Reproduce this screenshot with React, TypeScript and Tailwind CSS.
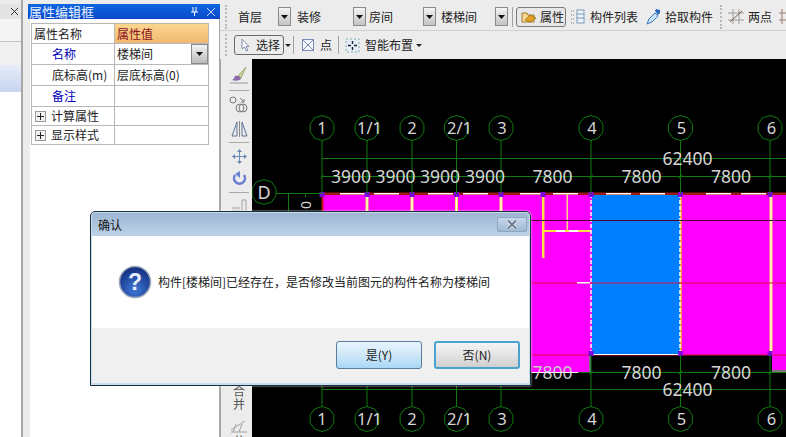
import React from "react";

const cjk = { fontFamily: '"Noto Sans CJK SC", "Liberation Sans", sans-serif' } as const;

function Arrow({ className = "" }: { className?: string }) {
  return (
    <span className={`flex h-[19px] w-[13px] shrink-0 items-center justify-center border border-[#8a8a8a] bg-gradient-to-b from-[#f4f4f4] to-[#c4c4c4] ${className}`}>
      <svg width="7" height="4" viewBox="0 0 7 4"><path d="M0 0h7L3.5 4z" fill="#111" /></svg>
    </span>
  );
}

function Caret() {
  return <svg width="6" height="3" viewBox="0 0 6 3"><path d="M0 0h6L3 3z" fill="#222" /></svg>;
}

function Combo({ label, w, ml }: { label: string; w: string; ml: string }) {
  return (
    <div className={`flex shrink-0 items-center ${ml}`}>
      <span className={`${w} text-[12px] leading-none text-[#222]`}>{label}</span>
      <Arrow />
    </div>
  );
}

function Row({ name, value, blue, plus, arrow, h }: { name: string; value?: string; blue?: boolean; plus?: boolean; arrow?: boolean; h: string }) {
  return (
    <div className={`flex ${h} border-b border-[#b8b8b8]`}>
      <div className="flex w-[83px] items-center border-r border-[#b8b8b8]">
        {plus ? (
          <span className="ml-[3px] mr-[5px] flex h-[11px] w-[11px] items-center justify-center border border-[#999] bg-[#f2f2f2]">
            <svg width="7" height="7" viewBox="0 0 7 7"><path d="M0 3.5h7M3.5 0v7" stroke="#222" /></svg>
          </span>
        ) : (
          <span className="w-[20px]" />
        )}
        <span className={`whitespace-nowrap text-[12px] leading-none ${blue ? "text-[#0000b8]" : "text-[#222]"}`}>{name}</span>
      </div>
      <div className="relative flex flex-1 items-center pl-[2px] text-[12px] leading-none text-[#222]">
        {value}
        {arrow && (
          <span className="absolute right-0 top-0 flex h-[20px] w-[17px] items-center justify-center border border-[#8a8a8a] bg-gradient-to-b from-[#f2f2f2] to-[#bcbcbc]">
            <svg width="7" height="4" viewBox="0 0 7 4"><path d="M0 0h7L3.5 4z" fill="#111" /></svg>
          </span>
        )}
      </div>
    </div>
  );
}

function Handle({ className = "" }: { className?: string }) {
  return <span className={`w-0 shrink-0 border-l-2 border-dotted border-[#b8b8b8] ${className}`} />;
}

function SideIcon({ children, mt }: { children: React.ReactNode; mt: string }) {
  return <div className={`flex justify-center ${mt}`}>{children}</div>;
}

function Divider({ mt }: { mt: string }) {
  return <div className={`mx-auto h-px w-[20px] bg-[#a8a8a8] ${mt}`} />;
}

const axes: [string, number, number][] = [
  ["1", 322, 322],
  ["1/1", 367, 369.5],
  ["2", 412, 412],
  ["2/1", 456.5, 459.5],
  ["3", 501, 502],
  ["4", 591, 592],
  ["5", 680.5, 681.5],
  ["6", 770, 771.5],
];

const G = "#0f7a0f";
const T = "#d6d6d6";

function Oct({ cx, cy, r = 12.5 }: { cx: number; cy: number; r?: number }) {
  const pts = Array.from({ length: 10 }, (_, i) => {
    const a = (Math.PI * 2 * i) / 10 + Math.PI / 10;
    return `${cx + r * Math.cos(a)},${cy + r * Math.sin(a)}`;
  }).join(" ");
  return <polygon points={pts} fill="none" stroke={G} strokeWidth="1" />;
}

function Canvas() {
  const num = { fontFamily: '"Noto Sans", sans-serif', fontSize: 17.5, fill: T, textAnchor: "middle" as const };
  return (
    <svg width="534" height="378" viewBox="252 59 534 378" className="block bg-black">
      <rect x="322" y="194" width="464" height="161" fill="#ff00ff" />
      <rect x="322" y="355" width="268" height="17" fill="#ff00ff" />
      <rect x="772" y="355" width="14" height="15" fill="#ff00ff" />
      <rect x="772" y="370" width="14" height="2" fill="#777" />
      <rect x="589" y="355" width="2" height="17" fill="#777" />
      <rect x="592" y="194" width="88" height="161" fill="#0080ff" />

      <rect x="322" y="192.5" width="464" height="2.5" fill="#9c1c10" />
      {[340, 374, 428, 463, 520, 553, 606, 640, 706, 741].map((x) => (
        <rect key={x} x={x} y="193" width="25" height="1.5" fill="#fff" />
      ))}
      <line x1="322.5" y1="193" x2="322.5" y2="215" stroke="#c01010" strokeWidth="2" />
      {[367, 412, 456.5, 501].map((x) => (
        <g key={x}>
          <rect x={x - 1.5} y="194" width="3" height="30" fill="#ffe060" />
          <rect x={x - 0.5} y="194" width="1" height="30" fill="#fff" />
        </g>
      ))}
      <rect x="542" y="194" width="2.5" height="64" fill="#ffe040" />
      <rect x="566.5" y="194" width="1.5" height="37" fill="#ffd080" />
      <rect x="543" y="230" width="48" height="2" fill="#ffe040" />
      <rect x="556" y="230" width="9" height="2" fill="#fff" />
      <rect x="569" y="230" width="9" height="2" fill="#fff" />
      <line x1="591" y1="194" x2="591" y2="355" stroke="#fff" strokeWidth="1.5" strokeDasharray="4 2" />
      <rect x="680" y="194" width="2" height="161" fill="#ff9040" />
      <line x1="680" y1="194" x2="680" y2="355" stroke="#fff" strokeWidth="1.5" strokeDasharray="4 2" />
      <rect x="769.5" y="194" width="3" height="161" fill="#ffe060" />
      <rect x="770.5" y="194" width="1" height="161" fill="#fff" />
      <line x1="322" y1="220.5" x2="786" y2="220.5" stroke="#500030" strokeWidth="1" />
      <line x1="322" y1="283" x2="786" y2="283" stroke="#e01040" strokeWidth="1" />
      <line x1="322" y1="355" x2="786" y2="355" stroke="#e01040" strokeWidth="1" />
      <rect x="577" y="282" width="13" height="1.5" fill="#fff" />
      <line x1="592" y1="354.5" x2="680" y2="354.5" stroke="#fff" strokeWidth="1" />
      {[322, 367, 412, 456.5, 501, 543, 591, 680.5, 770].map((x) => (
        <rect key={x} x={x - 2.5} y="192" width="5" height="5" fill="#8000e0" />
      ))}
      {[591, 680.5, 770].map((x) => (
        <rect key={x} x={x - 2.5} y="351" width="5" height="5" fill="#8000e0" />
      ))}

      <line x1="322" y1="158.5" x2="786" y2="158.5" stroke={G} />
      <line x1="322" y1="176.5" x2="786" y2="176.5" stroke={G} />
      <line x1="322" y1="372.5" x2="786" y2="372.5" stroke={G} />
      <line x1="322" y1="389.5" x2="786" y2="389.5" stroke={G} />
      <line x1="276" y1="193.5" x2="322" y2="193.5" stroke={G} />
      <line x1="288.5" y1="193" x2="288.5" y2="215" stroke={G} />
      <line x1="305.5" y1="193" x2="305.5" y2="197" stroke={G} />
      {axes.map(([label, x, tx]) => (
        <g key={label}>
          <line x1={x} y1="140.5" x2={x} y2="194" stroke={G} />
          <line x1={x} y1="355" x2={x} y2="406.5" stroke={G} />
          <Oct cx={x} cy={128} />
          <Oct cx={x} cy={419} />
          <text x={tx} y="134" {...num} fontSize="16.5">{label}</text>
          <text x={tx} y="425" {...num} fontSize="16.5">{label}</text>
        </g>
      ))}
      {[322, 367, 412, 456.5, 501, 591, 680.5, 770].map((x) => (
        <path key={x} d={`M${x - 2} 178.5l4 -4M${x - 2} 374.5l4 -4`} stroke={G} />
      ))}

      <Oct cx={264} cy={192} />
      <text x="264" y="198.5" {...num} fontSize="18">D</text>
      <text x="0" y="0" {...num} fontSize="14" transform="translate(300.5 205) rotate(90)">0</text>

      {[351, 395.5, 440, 485].map((x) => (
        <text key={x} x={x} y="182.5" {...num}>3900</text>
      ))}
      {[552.5, 641.5, 731].map((x) => (
        <text key={x} x={x} y="182.5" {...num}>7800</text>
      ))}
      <text x="687.5" y="165" {...num}>62400</text>
      <text x="552.5" y="378.5" {...num} fill="#c8c8c8">7800</text>
      <line x1="532" y1="372.5" x2="578" y2="372.5" stroke="#fff" />
      <text x="641.5" y="378.5" {...num}>7800</text>
      <text x="731" y="378.5" {...num}>7800</text>
      <text x="687.5" y="395.5" {...num}>62400</text>
    </svg>
  );
}

function HelpIcon() {
  return (
    <svg width="34" height="34" viewBox="0 0 34 34" className="shrink-0">
      <defs>
        <radialGradient id="q" cx="50%" cy="75%" r="70%">
          <stop offset="0" stopColor="#3f78d8" />
          <stop offset="1" stopColor="#132f80" />
        </radialGradient>
      </defs>
      <circle cx="17" cy="17" r="15.5" fill="url(#q)" stroke="#9aa4b8" strokeWidth="1.5" />
      <text x="17" y="25" textAnchor="middle" fontSize="23" fontWeight="700" fill="#e8eef8" fontFamily='"Liberation Sans", sans-serif'>?</text>
    </svg>
  );
}

function Dialog() {
  return (
    <div className="absolute left-[90px] top-[211px] flex h-[175px] w-[441px] flex-col rounded-t-[5px] border border-[#18303c] bg-[#c8dcee] px-px pb-[2px] pt-px shadow-[0_0_2px_#fff]">
      <div className="flex h-[23px] items-center justify-between rounded-t-[4px] bg-gradient-to-b from-[#9db6d2] to-[#bdd3ea] pl-[6px] pr-[2px]">
        <span className="text-[12px] leading-none text-[#111]">确认</span>
        <span className="flex h-[15px] w-[30px] items-center justify-center rounded-[2px] border border-[#8ea6c0] bg-gradient-to-b from-[#c8d8ea] to-[#9fb8d4]">
          <svg width="14" height="11" viewBox="0 0 14 11">
            <path d="M3 1.5l8 8M11 1.5l-8 8" stroke="#e8eef6" strokeWidth="3.4" />
            <path d="M3 1.5l8 8M11 1.5l-8 8" stroke="#68788a" strokeWidth="1.8" />
          </svg>
        </span>
      </div>
      <div className="flex h-[92px] items-center gap-[6px] bg-white pl-[26px]">
        <HelpIcon />
        <span className="text-[12px] leading-none text-[#222]">构件[楼梯间]已经存在，是否修改当前图元的构件名称为楼梯间</span>
      </div>
      <div className="flex flex-1 items-start justify-end gap-[12px] bg-[#f0f0f0] pr-[9px] pt-[13px]">
        <button className="flex h-[28px] w-[86px] items-center justify-center rounded-[3px] border border-[#5c7c9c] bg-gradient-to-b from-[#e6f4fc] via-[#cfe8f8] to-[#a8d8f6] text-[12px] leading-none text-[#222]">是(Y)</button>
        <button className="flex h-[28px] w-[86px] items-center justify-center rounded-[3px] border-2 border-[#48a4cc] bg-gradient-to-b from-[#f4f4f4] via-[#e4e4e4] to-[#cfcfcf] text-[12px] leading-none text-[#222]">否(N)</button>
      </div>
    </div>
  );
}

export default function App() {
  return (
    <div className="relative flex h-[437px] w-[786px] overflow-hidden bg-[#ececec]" style={cjk}>
      {/* left strip */}
      <div className="flex w-[23px] flex-col border-r-2 border-[#a8a8a8]">
        <div className="mt-[4px] flex h-[15px] items-center justify-end bg-[#e4e4e4] pr-[2px]">
          <svg width="9" height="9" viewBox="0 0 9 9"><path d="M1 1l7 7M8 1L1 8" stroke="#333" /></svg>
        </div>
        <div className="h-[23px] border-b border-[#c4c4c4] bg-[#f4f4f4]" />
        <div className="h-[23px] bg-[#f0f0f0]" />
        <div className="h-[27px] bg-gradient-to-b from-[#e6ecf8] to-[#c8d4f0]" />
        <div className="flex-1 bg-white" />
      </div>

      {/* property panel */}
      <div className="flex w-[197px] flex-col pl-[5px] pt-[4px]">
        <div className="flex h-[15px] items-center justify-between bg-gradient-to-b from-[#0f66e0] to-[#0a48c8] pl-[1px] pr-[5px] text-[13px] leading-none text-[#e8f0ff]">
          <span>属性编辑框</span>
          <span className="flex items-center gap-[9px]">
            <svg width="7" height="9" viewBox="0 0 7 9"><path d="M2 0v5M5 0v5M0 5h7M3.5 5v4" stroke="#fff" /></svg>
            <svg width="8" height="8" viewBox="0 0 8 8"><path d="M0 0l8 8M8 0L0 8" stroke="#c8d8f8" /></svg>
          </span>
        </div>
        <div className="ml-[2px] flex-1 border-r border-[#a8a8a8] bg-white pl-[1px] pt-[4px]">
          <div className="w-[178px] border border-b-0 border-[#b8b8b8] bg-white">
            <div className="flex h-[20px] border-b border-[#b8b8b8]">
              <div className="flex w-[83px] items-center border-r border-[#b8b8b8] pl-[2px] text-[12px] leading-none text-[#222]">属性名称</div>
              <div className="flex flex-1 items-center bg-gradient-to-b from-[#fbd690] to-[#f0b870] pl-[2px] text-[12px] leading-none text-[#8a1020]">属性值</div>
            </div>
            <Row h="h-[21px]" name="名称" value="楼梯间" blue arrow />
            <Row h="h-[21px]" name="底标高(m)" value="层底标高(0)" />
            <Row h="h-[21px]" name="备注" blue />
            <Row h="h-[19px]" name="计算属性" plus />
            <Row h="h-[19px]" name="显示样式" plus />
          </div>
        </div>
      </div>

      {/* main */}
      <div className="flex w-[566px] flex-col">
        <div className="mt-[4px] flex h-[27px] items-center overflow-hidden whitespace-nowrap border-b border-[#d0d0d0] pl-[5px] text-[12px] leading-none text-[#222]">
          <Handle className="h-[24px]" />
          <div className="flex shrink-0 items-center pb-[1px]">
            <Combo label="首层" w="w-[40px]" ml="ml-[11px]" />
            <Combo label="装修" w="w-[56px]" ml="ml-[6px]" />
            <Combo label="房间" w="w-[54px]" ml="ml-[3px]" />
            <Combo label="楼梯间" w="w-[54px]" ml="ml-[5px]" />
            <span className="ml-[4px] h-[20px] w-px bg-[#a0a0a0]" />
            <div className="ml-[3px] flex h-[20px] w-[50px] items-center gap-[3px] rounded-[3px] border border-[#7a7a7a] bg-[#e8e8e8] pl-[4px]">
              <svg width="16" height="14" viewBox="0 0 16 14">
                <path d="M1 3h5l1 2h6v7H1z" fill="#f8d890" stroke="#a07830" />
                <path d="M4 10l5-5 6 3-6 4z" fill="#e8a020" stroke="#806010" strokeWidth=".6" />
              </svg>
              <span>属性</span>
            </div>
            <svg width="15" height="15" viewBox="0 0 15 15" className="ml-[4px]">
              <path d="M1 2h3M1 6h3M1 10h3M1 14h3" stroke="#6a7a8a" strokeDasharray="1 1" />
              <rect x="7" y="1" width="7" height="13" fill="#eef4fa" stroke="#7a9ab8" />
              <path d="M7 5h7M7 9h7" stroke="#7a9ab8" />
            </svg>
            <span className="ml-[5px]">构件列表</span>
            <svg width="15" height="17" viewBox="0 0 15 17" className="ml-[8px]">
              <path d="M1 16l2-5 6-6 3 3-6 6z" fill="#c8e4f8" stroke="#3a78c0" />
              <path d="M9 3l1-2 4 1 0 3-2 2z" fill="#2a68b8" />
            </svg>
            <span className="ml-[4px]">拾取构件</span>
            <Handle className="ml-[7px] h-[24px]" />
            <svg width="16" height="15" viewBox="0 0 16 15" className="ml-[6px]">
              <path d="M5 0v15M11 0v15M0 4h16M0 11h16" stroke="#9a9a9a" />
              <path d="M2 13L14 2" stroke="#7a5a4a" />
            </svg>
            <span className="ml-[4px]">两点</span>
            <svg width="8" height="15" viewBox="0 0 8 15" className="ml-[7px]">
              <path d="M3 0v15M0 4h8M0 11h8" stroke="#9a7a6a" />
            </svg>
          </div>
        </div>
        <div className="flex h-[28px] items-center pl-[5px] text-[12px] leading-none text-[#222]">
          <Handle className="h-[22px]" />
          <div className="ml-[7px] flex h-[20px] w-[50px] items-center gap-[5px] rounded-[3px] border border-[#6a6a6a] bg-[#ececec] pl-[6px]">
            <svg width="10" height="14" viewBox="0 0 10 14"><path d="M1 1v10l2.5-2 2 4 1.5-.8-2-3.8H8z" fill="#fff" stroke="#8090b0" /></svg>
            <span className="whitespace-nowrap">选择</span>
          </div>
          <span className="ml-[1px]"><Caret /></span>
          <span className="ml-[2px] h-[18px] w-px bg-[#a0a0a0]" />
          <svg width="12" height="12" viewBox="0 0 12 12" className="ml-[8px]"><rect x=".5" y=".5" width="11" height="11" fill="#f4f6fc" stroke="#7a88b8" /><path d="M1 1l10 10M11 1L1 11" stroke="#7a88b8" /></svg>
          <span className="ml-[6px]">点</span>
          <span className="ml-[6px] h-[18px] w-px bg-[#a0a0a0]" />
          <svg width="15" height="15" viewBox="0 0 15 15" className="ml-[6px]">
            <rect x="1" y="1" width="13" height="13" fill="#e4eef8" stroke="#8aa" strokeDasharray="2 2" />
            <path d="M7.5 3v3M7.5 9v3M3 7.5h3M9 7.5h3" stroke="#223" strokeWidth="1.4" />
          </svg>
          <span className="ml-[5px]">智能布置</span>
          <span className="ml-[3px]"><Caret /></span>
        </div>
        <div className="flex min-h-0 flex-1">
          <div className="h-[378px] w-[32px] overflow-hidden border-l border-[#a8a8a8] pl-[5px] pt-[7px]">
            <SideIcon mt="mt-0">
              <svg width="20" height="19" viewBox="0 0 20 19">
                <path d="M17 1L9 10l3 2z" fill="#c8d49a" stroke="#a0b070" />
                <path d="M6 10c3-1 6 1 6 3-2 2-6 2-9 1 2-1 2-2 3-4z" fill="#8a6aa8" />
                <path d="M1 17h18" stroke="#999" />
              </svg>
            </SideIcon>
            <Divider mt="mt-[5px]" />
            <SideIcon mt="mt-[5px]">
              <svg width="20" height="17" viewBox="0 0 20 17" fill="none" stroke="#7a7a7a">
                <circle cx="4" cy="4" r="3" />
                <circle cx="11" cy="12" r="4" />
                <circle cx="14" cy="12" r="4" />
                <path d="M11 2l4 4M15 3v3h-3" />
              </svg>
            </SideIcon>
            <SideIcon mt="mt-[8px]">
              <svg width="17" height="16" viewBox="0 0 17 16" fill="none" stroke="#5a7898">
                <path d="M6 1L1 15h5zM11 1l5 14h-5z" />
                <path d="M8.5 0v16" stroke="#888" />
              </svg>
            </SideIcon>
            <Divider mt="mt-[5px]" />
            <SideIcon mt="mt-[6px]">
              <svg width="15" height="15" viewBox="0 0 15 15" fill="#6a8ab0">
                <path d="M7 3h1v9H7zM3 7h9v1H3z" />
                <path d="M7.5 0L5 3h5zM7.5 15L5 12h5zM0 7.5L3 5v5zM15 7.5L12 5v5z" />
              </svg>
            </SideIcon>
            <SideIcon mt="mt-[7px]">
              <svg width="15" height="15" viewBox="0 0 15 15" fill="none">
                <path d="M3 4a5.5 5.5 0 1 0 9 0" stroke="#6a80d0" strokeWidth="2.6" />
                <path d="M8 0v7L3 3z" fill="#6a80d0" />
              </svg>
            </SideIcon>
            <Divider mt="mt-[6px]" />
            <SideIcon mt="mt-[6px]">
              <svg width="16" height="14" viewBox="0 0 16 14" fill="none" stroke="#a0a0a0">
                <path d="M1 9h8M1 12h8M11 1h4v13h-4z" />
              </svg>
            </SideIcon>
            <div className="mt-[171px] text-center text-[12px] leading-[13px] text-[#555]">
              <div>合</div>
              <div>并</div>
            </div>
            <SideIcon mt="mt-[8px]">
              <svg width="18" height="15" viewBox="0 0 18 15" fill="none" stroke="#a0a0a0">
                <path d="M1 12L15 3M3 14l3-8M9 14l3-8M1 14h16" />
              </svg>
            </SideIcon>
            <div className="mt-[1px] text-center text-[12px] leading-[13px] text-[#555]">分</div>
          </div>
          <Canvas />
        </div>
      </div>

      <Dialog />
    </div>
  );
}
